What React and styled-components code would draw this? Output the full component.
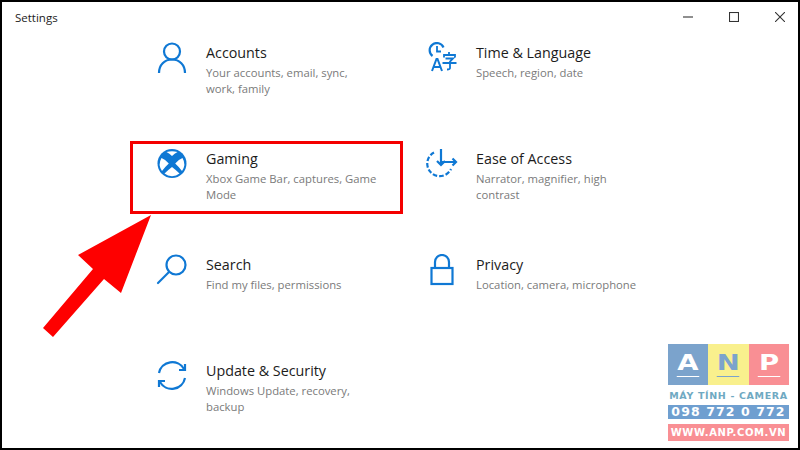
import React from 'react';
import styled, { createGlobalStyle } from 'styled-components';

const GlobalStyle = createGlobalStyle`
  html, body {
    margin: 0;
    padding: 0;
    background: #fff;
  }
`;

const Screen = styled.div`
  position: relative;
  width: 800px;
  height: 450px;
  box-sizing: border-box;
  border: 2px solid #000;
  background: #fff;
  overflow: hidden;
  font-family: 'Open Sans', 'Noto Sans', sans-serif;
`;

const TitleBar = styled.div`
  display: flex;
  align-items: center;
  justify-content: space-between;
  height: 30px;
  padding-left: 13px;
`;

const AppName = styled.div`
  font-size: 11.5px;
  color: #222;
`;

const WindowButtons = styled.div`
  display: flex;
  height: 30px;
`;

const WindowButton = styled.div`
  display: flex;
  align-items: center;
  justify-content: center;
  width: 46px;
  box-sizing: border-box;
  padding-left: 10px;
  color: #333;
`;

const Grid = styled.div`
  display: grid;
  grid-template-columns: 270px 270px;
  grid-auto-rows: 106px;
  padding: 8px 0 0 154px;
`;

const Tile = styled.div`
  display: flex;
  gap: 18px;
`;

const IconBox = styled.div`
  width: 32px;
  height: 32px;
  flex: none;
  color: #0f78d4;
  margin-top: 2px;
`;

const TileText = styled.div`
  width: 172px;
  padding-top: 3px;
`;

const TileTitle = styled.div`
  font-size: 14.3px;
  line-height: 20px;
  color: #1c1c1c;
`;

const TileSub = styled.div`
  font-size: 11.3px;
  line-height: 16px;
  margin-top: 2px;
  color: #7a7a7a;
`;

const Highlight = styled.div`
  position: absolute;
  left: 128px;
  top: 139px;
  width: 273px;
  height: 73px;
  box-sizing: border-box;
  border: 3px solid #f40000;
`;

const Arrow = styled.svg`
  position: absolute;
  left: 38px;
  top: 211px;
`;

const Logo = styled.div`
  position: absolute;
  left: 666px;
  top: 342px;
  width: 121px;
  display: flex;
  flex-direction: column;
  font-family: 'DejaVu Sans', sans-serif;
  font-weight: 700;
`;

const LogoLetters = styled.div`
  display: grid;
  grid-template-columns: repeat(3, 1fr);
  height: 41px;
`;

const LogoLetter = styled.div`
  display: flex;
  align-items: flex-start;
  justify-content: center;
  padding-top: 6px;
  box-sizing: border-box;
  background: ${p => p.$bg};
`;

const LogoGlyph = styled.span`
  width: 18px;
  text-align: center;
  font-size: 22px;
  line-height: 26px;
  transform: scaleX(1.25);
  color: ${p => p.$fg};
  border-bottom: 1px solid ${p => p.$fg};
`;

const LogoTagline = styled.div`
  font-size: 9.5px;
  line-height: 10px;
  margin-top: 6px;
  letter-spacing: 0.65px;
  white-space: nowrap;
  text-align: center;
  color: #6fa9c2;
`;

const LogoBand = styled.div`
  height: ${p => p.$h}px;
  line-height: ${p => p.$h}px;
  background: ${p => p.$bg};
  color: #fff;
  text-align: center;
  white-space: nowrap;
  font-size: ${p => p.$size}px;
  letter-spacing: ${p => p.$spacing}px;
  margin-top: ${p => p.$top}px;
`;

const Svg = ({ children }) => (
  <svg width="32" height="32" viewBox="0 0 32 32" fill="none" stroke="currentColor" strokeWidth="2.2">
    {children}
  </svg>
);

const AccountsIcon = () => (
  <Svg>
    <circle cx="16" cy="9.500" r="8" />
    <path d="M3 31c0-8 5.500-13.500 13-13.500S29 23 29 31" />
  </Svg>
);

const LanguageIcon = () => (
  <Svg>
    <path d="M6.500 14a7.200 7.200 0 1 1 11-8.500" />
    <path d="M11 4v5.500h4" strokeWidth="1.800" />
    <path d="M6 29l4.500-12h1L16 29M7.500 25h7" strokeWidth="2" />
    <path d="M23 10v2.500M18 15.500v-2.500h11v2.500M19.500 16.500h7.500l-3 3v6.500c0 1-1 1.500-3 1.500M16.500 21h14" strokeWidth="1.800" />
  </Svg>
);

const XboxIcon = () => (
  <svg width="32" height="32" viewBox="0 0 32 32">
    <circle cx="16" cy="15.500" r="14.500" fill="currentColor" />
    <g fill="#fff">
      <path d="M10.500 3.900Q16 2.800 21.500 3.900 18.500 5.200 16 8 13.500 5.200 10.500 3.900z" />
      <path d="M5.500 10Q9.500 11.500 12.800 15.500 8.500 19.500 6 23A12 12 0 0 1 5.500 10z" />
      <path d="M26.500 10Q22.500 11.500 19.200 15.500 23.500 19.500 26 23A12 12 0 0 0 26.500 10z" />
      <path d="M16 19Q20.500 22.500 23.500 25.500A12 12 0 0 1 8.500 25.500Q11.500 22.500 16 19z" />
    </g>
  </svg>
);

const EaseIcon = () => (
  <Svg>
    <path d="M8 4.500A12.500 12.500 0 1 0 25 21" strokeDasharray="4.500 2" />
    <path d="M15 1v16M11 13l4 4 4-4" />
    <path d="M15 14h15M26.500 10.500l3.500 3.500-3.500 3.500" />
  </Svg>
);

const SearchIcon = () => (
  <Svg>
    <circle cx="20" cy="11" r="9.500" />
    <path d="M13 18L2 29" strokeLinecap="round" />
  </Svg>
);

const LockIcon = () => (
  <Svg>
    <path d="M9 14V8a7 7 0 0 1 14 0v6" />
    <rect x="5.500" y="14" width="21" height="16" />
  </Svg>
);

const UpdateIcon = () => (
  <Svg>
    <path d="M3 13a13.500 13.500 0 0 1 25-4" />
    <path d="M29 4v6h-6" />
    <path d="M29 18a13.500 13.500 0 0 1-25 4" />
    <path d="M3 27v-6h6" />
  </Svg>
);

const tiles = [
  { icon: <AccountsIcon />, title: 'Accounts', sub: 'Your accounts, email, sync, work, family' },
  { icon: <LanguageIcon />, title: 'Time & Language', sub: 'Speech, region, date' },
  { icon: <XboxIcon />, title: 'Gaming', sub: 'Xbox Game Bar, captures, Game Mode' },
  { icon: <EaseIcon />, title: 'Ease of Access', sub: 'Narrator, magnifier, high contrast' },
  { icon: <SearchIcon />, title: 'Search', sub: 'Find my files, permissions' },
  { icon: <LockIcon />, title: 'Privacy', sub: 'Location, camera, microphone' },
  { icon: <UpdateIcon />, title: 'Update & Security', sub: 'Windows Update, recovery, backup' }
];

export default function App() {
  return (
    <Screen>
      <GlobalStyle />
      <TitleBar>
        <AppName>Settings</AppName>
        <WindowButtons>
          <WindowButton>
            <svg width="10" height="10" viewBox="0 0 10 10" stroke="currentColor" strokeWidth="1.100">
              <path d="M0 5h10" />
            </svg>
          </WindowButton>
          <WindowButton>
            <svg width="10" height="10" viewBox="0 0 10 10" fill="none" stroke="currentColor" strokeWidth="1.100">
              <rect x="0.500" y="0.500" width="9" height="9" />
            </svg>
          </WindowButton>
          <WindowButton>
            <svg width="10" height="10" viewBox="0 0 10 10" stroke="currentColor" strokeWidth="1.100">
              <path d="M0 0l10 10M10 0L0 10" />
            </svg>
          </WindowButton>
        </WindowButtons>
      </TitleBar>
      <Grid>
        {tiles.map(tile => (
          <Tile key={tile.title}>
            <IconBox>{tile.icon}</IconBox>
            <TileText>
              <TileTitle>{tile.title}</TileTitle>
              <TileSub>{tile.sub}</TileSub>
            </TileText>
          </Tile>
        ))}
      </Grid>
      <Highlight />
      <Arrow width="115" height="128" viewBox="0 0 115 128">
        <path d="M111 2L81 80 64 66 13 124 3 115 53 56 38 42z" fill="#fe0000" />
      </Arrow>
      <Logo>
        <LogoLetters>
          <LogoLetter $bg="#7ba3cc"><LogoGlyph $fg="#fff">A</LogoGlyph></LogoLetter>
          <LogoLetter $bg="#f9f08d"><LogoGlyph $fg="#7ba3cc">N</LogoGlyph></LogoLetter>
          <LogoLetter $bg="#f98f94"><LogoGlyph $fg="#fff">P</LogoGlyph></LogoLetter>
        </LogoLetters>
        <LogoTagline>MÁY TÍNH - CAMERA</LogoTagline>
        <LogoBand $h={14} $top={4} $bg="#6f9fd0" $size={12.5} $spacing={1.1}>098 772 0 772</LogoBand>
        <LogoBand $h={17} $top={5} $bg="#f98f94" $size={10} $spacing={0.6}>WWW.ANP.COM.VN</LogoBand>
      </Logo>
    </Screen>
  );
}
